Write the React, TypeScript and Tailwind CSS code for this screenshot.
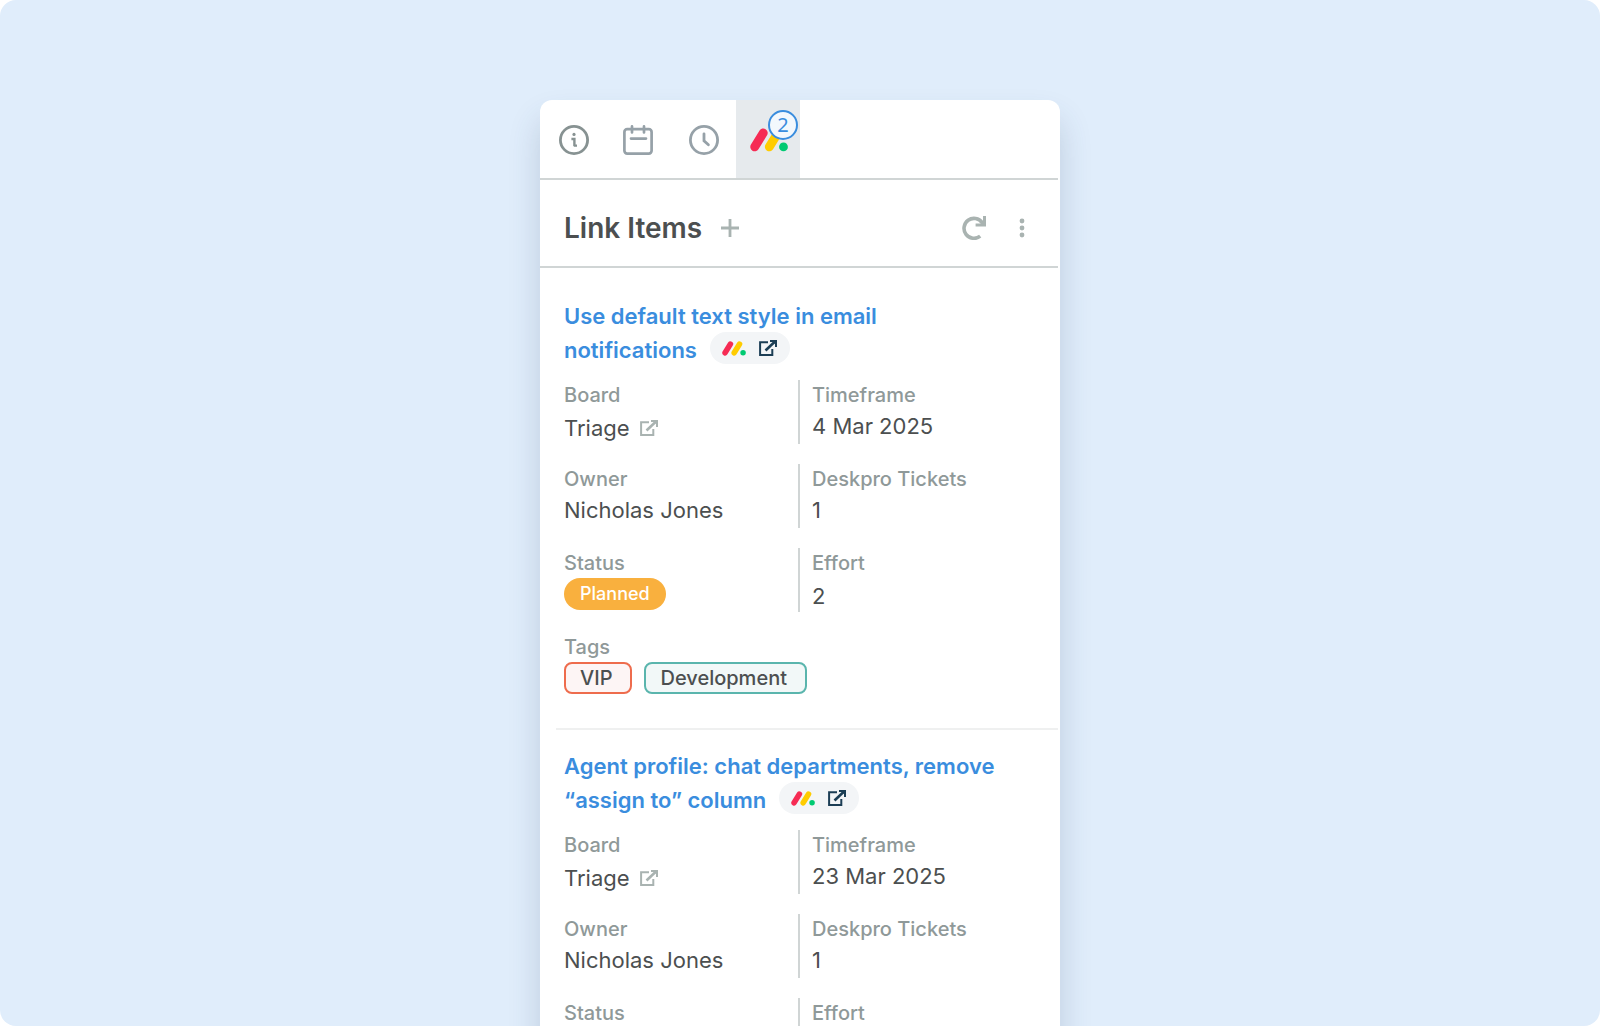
import React from 'react';

interface LinkedItem {
  id: string;
  titleLines: string[];
  board: string;
  timeframe: string;
  owner: string;
  tickets: number;
  status: string;
  effort: number;
}

const ITEMS: LinkedItem[] = [
  {
    id: 'email-text-style',
    titleLines: ['Use default text style in email', 'notifications'],
    board: 'Triage',
    timeframe: '4 Mar 2025',
    owner: 'Nicholas Jones',
    tickets: 1,
    status: 'Planned',
    effort: 2,
  },
  {
    id: 'agent-profile',
    titleLines: ['Agent profile: chat departments, remove', '“assign to” column'],
    board: 'Triage',
    timeframe: '23 Mar 2025',
    owner: 'Nicholas Jones',
    tickets: 1,
    status: 'Planned',
    effort: 2,
  },
];

const MondayLogo: React.FC<{ className?: string }> = ({ className }) => (
  <svg viewBox="0 0 38 24" fill="none" className={className} aria-hidden="true">
    <path d="M4.7 18.9 13.3 4.9" stroke="#f62b54" strokeWidth="8.8" strokeLinecap="round" />
    <path d="M19.3 18.9 27.9 4.9" stroke="#ffcc00" strokeWidth="8.8" strokeLinecap="round" />
    <circle cx="33.5" cy="18.9" r="4.4" fill="#00ca72" />
  </svg>
);

const ExternalIcon: React.FC<{ className?: string }> = ({ className }) => (
  <svg viewBox="0 0 18 16" fill="none" stroke="currentColor" strokeWidth="2" className={className} aria-hidden="true">
    <path d="M9 2.2H1.1v12.7h12.2V9" />
    <path d="M6.5 10.5 15.5 2" strokeWidth="2.6" />
    <path d="M11 1h6v6" />
    <path d="M13 1h4v4z" fill="currentColor" stroke="none" />
  </svg>
);

const InfoIcon = () => (
  <svg viewBox="0 0 32 32" fill="none" stroke="currentColor" strokeWidth="2.8" className="size-8" aria-hidden="true">
    <circle cx="16" cy="16" r="13.6" />
    <path d="M13.4 15h3v7.2M16 21.6h3" strokeWidth="2.4" />
    <circle cx="16" cy="10.4" r="1.6" fill="currentColor" stroke="none" />
  </svg>
);

const CalendarIcon = () => (
  <svg viewBox="0 0 32 32" fill="none" stroke="currentColor" strokeWidth="2.7" strokeLinecap="round" className="size-8" aria-hidden="true">
    <rect x="2.4" y="5.2" width="27.2" height="24.4" rx="2.8" />
    <path d="M10 2.4v6M22 2.4v6M9 14.6h15" />
  </svg>
);

const ClockIcon = () => (
  <svg viewBox="0 0 32 32" fill="none" stroke="currentColor" strokeWidth="2.8" strokeLinecap="round" className="size-8" aria-hidden="true">
    <circle cx="16" cy="16" r="13.6" />
    <path d="M16 9.8v7l4.4 4" />
  </svg>
);

const RefreshIcon = () => (
  <svg viewBox="0 0 24 24" fill="none" className="size-6" aria-hidden="true">
    <path d="M18.2 20.2A10 10 0 1 1 20.2 6.6" stroke="currentColor" strokeWidth="3.6" />
    <path d="M24 0v10.4H13.6V7.4h5L21 5V0z" fill="currentColor" />
  </svg>
);

const Field: React.FC<{ label: string; divided?: boolean; children: React.ReactNode }> = ({
  label,
  divided,
  children,
}) => (
  <div className={`h-16 ${divided ? 'border-l-2 border-[#d0d5d5] pl-3' : ''}`}>
    <dt className="text-[20px] font-medium leading-[30px] text-[#8f9999]">{label}</dt>
    <dd className="text-[22px] leading-8 text-[#4c4f50]">{children}</dd>
  </div>
);

const ItemCard: React.FC<{ item: LinkedItem }> = ({ item }) => {
  const [firstLine, lastLine] = item.titleLines;

  return (
    <article className="pl-6 pr-[26px]">
      <h2 className="text-[22px] font-semibold leading-[34px] text-[#3a8dde]">
        <a href={`#${item.id}`} className="block">
          {firstLine}
        </a>
        <span className="flex h-[34px] items-center gap-[13px]">
          <a href={`#${item.id}`}>{lastLine}</a>
          <a
            href="#monday"
            aria-label="Open in monday.com"
            className="mb-1 flex h-8 w-20 items-center justify-between rounded-full bg-[#f3f5f7] pl-3 pr-[13px] text-[#1c3e55]"
          >
            <MondayLogo className="h-[15px] w-6" />
            <ExternalIcon className="h-4 w-[18px]" />
          </a>
        </span>
      </h2>

      <dl className="mt-[13px] grid grid-cols-2 gap-y-5">
        <Field label="Board">
          <span className="flex items-center gap-2.5 leading-9">
            {item.board}
            <a href="#board" aria-label="Open board" className="text-[#a9b3b1]">
              <ExternalIcon className="h-4 w-[18px]" />
            </a>
          </span>
        </Field>
        <Field label="Timeframe" divided>
          {item.timeframe}
        </Field>
        <Field label="Owner">{item.owner}</Field>
        <Field label="Deskpro Tickets" divided>
          {item.tickets}
        </Field>
        <Field label="Status">
          <span className="flex h-8 w-fit items-center rounded-full bg-[#f9b03e] px-4 text-[18px] font-medium text-white">
            {item.status}
          </span>
        </Field>
        <Field label="Effort" divided>
          <span className="block leading-9">{item.effort}</span>
        </Field>
        <Field label="Tags">
          <span className="flex gap-3 text-[20px] font-medium leading-7">
            <span className="rounded-lg border-2 border-[#ee6c4d] bg-[#fdf5f5] pl-3.5 pr-[18px]">VIP</span>
            <span className="rounded-lg border-2 border-[#5ab5ad] bg-[#f2f8f8] pl-3.5 pr-[18px]">Development</span>
          </span>
        </Field>
      </dl>
    </article>
  );
};

const App: React.FC = () => {
  return (
    <div className="h-screen overflow-hidden rounded-2xl bg-[#e0edfb] pt-25 font-['Inter',sans-serif]">
      <main className="mx-auto min-h-screen w-full max-w-[520px] rounded-t-xl bg-white pr-0.5 shadow-[0_20px_32px_rgba(50,75,105,0.2)]">
        <nav className="flex h-20 border-b-2 border-[#d0d5d5] text-[#96a1a8]">
          <button aria-label="Info" className="flex w-[66px] items-center justify-center pl-0.5 pt-0.5 text-[#879292]">
            <InfoIcon />
          </button>
          <button aria-label="Calendar" className="flex w-16 items-center justify-center pt-0.5">
            <CalendarIcon />
          </button>
          <button aria-label="History" className="flex w-[66px] items-center justify-center pl-0.5 pt-0.5">
            <ClockIcon />
          </button>
          <button aria-label="monday.com" className="relative flex w-16 items-center justify-center bg-[#e6eaed] pl-0.5 pt-0.5">
            <MondayLogo className="h-6 w-[38px]" />
            <span className="absolute right-0.5 top-2.5 flex size-[30px] items-center justify-center rounded-full border-2 border-[#3a8dde] bg-[#f3f8fd] font-['Noto_Sans',sans-serif] text-[20px] leading-none text-[#3a8dde]">
              2
            </span>
          </button>
        </nav>

        <header className="flex h-22 items-center border-b-2 border-[#d0d5d5] pl-6 pr-[26px] pt-2.5 text-[#a9b3b1]">
          <h1 className="text-[28px] font-semibold text-[#4c4f50]">Link Items</h1>
          <button aria-label="Link another item" className="ml-[19px]">
            <svg viewBox="0 0 18 18" stroke="currentColor" strokeWidth="2.8" className="size-[18px]" aria-hidden="true">
              <path d="M9 0v18M0 9h18" />
            </svg>
          </button>
          <button aria-label="Refresh" className="ml-auto">
            <RefreshIcon />
          </button>
          <button aria-label="More options" className="ml-[26px]">
            <svg viewBox="0 0 20 20" fill="currentColor" className="size-5" aria-hidden="true">
              <circle cx="10" cy="3" r="2.4" />
              <circle cx="10" cy="10" r="2.4" />
              <circle cx="10" cy="17" r="2.4" />
            </svg>
          </button>
        </header>

        <div className="pt-[31px]">
          {ITEMS.map((item, index) => (
            <React.Fragment key={item.id}>
              {index > 0 && <hr className="mb-[19px] mt-8 ml-4 border-t-2 border-[#eff0f0]" />}
              <ItemCard item={item} />
            </React.Fragment>
          ))}
        </div>
      </main>
    </div>
  );
};

export default App;
